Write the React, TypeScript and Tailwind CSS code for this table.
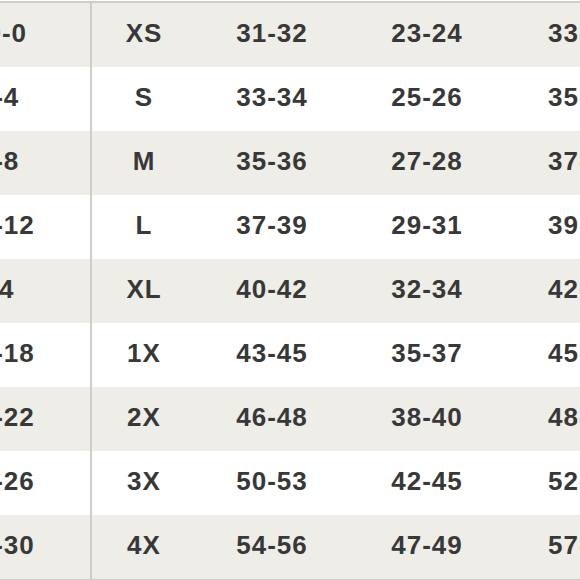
const rows: string[][] = [
  ['00-0', 'XS', '31-32', '23-24', '33-34'],
  ['2-4', 'S', '33-34', '25-26', '35-36'],
  ['6-8', 'M', '35-36', '27-28', '37-38'],
  ['10-12', 'L', '37-39', '29-31', '39-41'],
  ['14', 'XL', '40-42', '32-34', '42-44'],
  ['16-18', '1X', '43-45', '35-37', '45-47'],
  ['20-22', '2X', '46-48', '38-40', '48-50'],
  ['24-26', '3X', '50-53', '42-45', '52-55'],
  ['28-30', '4X', '54-56', '47-49', '57-59'],
];

export default function App() {
  return (
    <div className="w-[580px] h-[580px] overflow-hidden bg-white">
      <div
        className="-ml-[96px] w-[770px] border-t-[2px] border-b-[2px] border-[#cfcdc9] mt-[1px]"
        style={{ fontFamily: '"Liberation Sans", Arial, sans-serif' }}
      >
        {rows.map((r, i) => (
          <div
            key={i}
            className={`grid grid-cols-[188px_104px_152px_158px_168px] h-[64px] items-center pb-[4px] text-[26px] font-bold tracking-[1px] text-[#383838] ${
              i % 2 === 0 ? 'bg-[#efede8]' : 'bg-white'
            }`}
          >
            <div className="-mb-[4px] h-[64px] flex items-center justify-center pb-[4px] pl-[4px] border-r-[2px] border-[#cfcdc9]">
              {r[0]}
            </div>
            <div className="text-center">{r[1]}</div>
            <div className="text-center">{r[2]}</div>
            <div className="text-center">{r[3]}</div>
            <div className="text-left pl-[42px]">{r[4]}</div>
          </div>
        ))}
      </div>
    </div>
  );
}
